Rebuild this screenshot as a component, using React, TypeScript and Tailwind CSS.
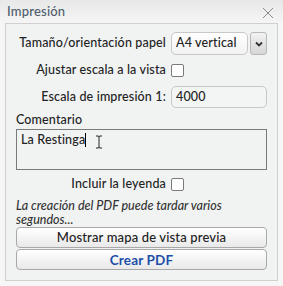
import React from "react";

const font = { fontFamily: "Lato, 'Liberation Sans', sans-serif" };

const Checkbox = () => (
  <span className="block w-[13px] h-[13px] rounded-[2px] border-[1.5px] border-[#7a7a7a] bg-white" />
);

export default function App() {
  return (
    <div
      className="w-[283px] h-[286px] bg-[#f6f6f6] flex flex-col text-[#222] text-[12.5px] font-medium overflow-hidden"
      style={font}
    >
      {/* header */}
      <div className="h-[23px] flex items-center justify-between pl-[7px] pr-[9px] bg-gradient-to-b from-[#e8e8e8] to-[#f5f5f5]">
        <span className="text-[13px] text-[#4e5d6c] leading-none -mt-[1px] tracking-[0.2px]">Impresión</span>
        <svg width="12" height="12" viewBox="0 0 12 12" className="mt-[3px]">
          <path d="M1 1 L11 11 M11 1 L1 11" stroke="#8a8a8a" strokeWidth="1" />
        </svg>
      </div>

      {/* body */}
      <div className="mx-[5px] h-[258px] border border-[#cfcfcf] bg-[#f1f3f3] px-[10px] pt-[8px] tracking-[0.15px]">
        <div className="grid grid-cols-[150px_1fr] gap-x-[5px] gap-y-[3px] items-center">
          <span className="text-right">Tamaño/orientación papel</span>
          <div className="flex gap-[2px] h-[23px]">
            <div className="flex-1 rounded-[5px] border border-[#c8c8c8] bg-gradient-to-b from-white to-[#f2f2f2] flex items-center pl-[4px]">
              A4 vertical
            </div>
            <div className="w-[17px] rounded-[3px] border border-[#b8b8b8] bg-gradient-to-b from-[#f2f2f2] to-[#d6d6d6] flex items-center justify-center">
              <svg width="8" height="6" viewBox="0 0 8 6">
                <path d="M1 1.5 L4 4.5 L7 1.5" stroke="#333" strokeWidth="1.8" fill="none" />
              </svg>
            </div>
          </div>

          <span className="text-right h-[25px] flex items-center justify-end">Ajustar escala a la vista</span>
          <Checkbox />

          <span className="text-right">Escala de impresión 1:</span>
          <div className="h-[22px] rounded-[5px] border border-[#c8c8c8] bg-[#f3f5f5] flex items-center pl-[4px]">
            4000
          </div>
        </div>

        <div className="mt-[4px] leading-[16px]">Comentario</div>
        <div className="relative mt-[1px] h-[41px] border border-[#7a7a7a] pl-[4px] pt-[2px] leading-[16px]">
          La Restinga<span className="inline-block w-px h-[14px] bg-black align-[-3px]" />
          <svg
            width="8"
            height="14"
            viewBox="0 0 8 14"
            className="absolute left-[78px] top-[5px]"
          >
            <path d="M1 1 H3 Q4 1 4 2 V12 Q4 13 3 13 H1 M7 1 H5 Q4 1 4 2 M4 12 Q4 13 5 13 H7" stroke="#222" strokeWidth="1" fill="none" />
          </svg>
        </div>

        <div className="mt-[6px] leading-[16px] grid grid-cols-[150px_1fr] gap-x-[5px] items-center">
          <span className="text-right">Incluir la leyenda</span>
          <Checkbox />
        </div>

        <div className="mt-[7px] italic leading-[14px] text-[#333] tracking-normal">
          La creación del PDF puede tardar varios segundos...
        </div>

        <div className="mt-0 flex flex-col gap-px">
          <button className="h-[21px] rounded-[4px] border border-[#a8a8a8] bg-gradient-to-b from-white to-[#e9e9e9] text-[13px] font-medium text-[#222]">
            Mostrar mapa de vista previa
          </button>
          <button className="h-[21px] rounded-[4px] border border-[#a8a8a8] bg-gradient-to-b from-white to-[#e9e9e9] text-[13.5px] font-bold text-[#1e4fa8]">
            Crear PDF
          </button>
        </div>
      </div>
    </div>
  );
}
